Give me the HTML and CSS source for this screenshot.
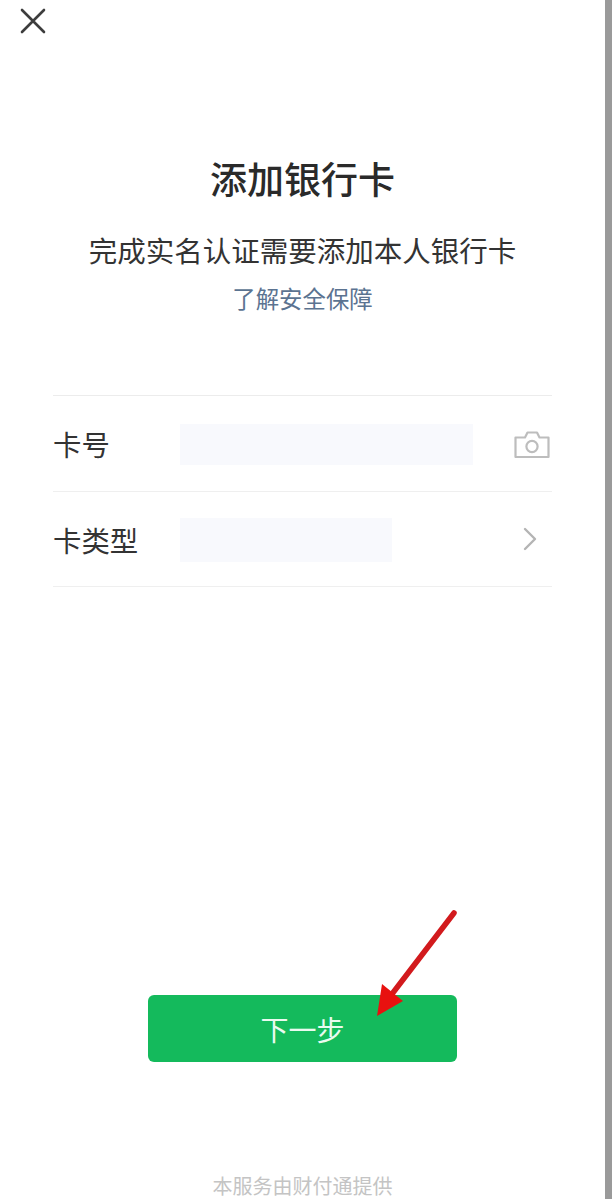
FILE: index.html
```html
<!DOCTYPE html>
<html lang="zh-CN">
<head>
<meta charset="utf-8">
<title>添加银行卡</title>
<link rel="stylesheet" href="styles.css">
</head>
<body>
<main class="page">
  <header class="topbar">
    <svg class="close" viewBox="0 0 26 26" width="26" height="26" aria-label="关闭">
      <path d="M2 2 L24 24 M24 2 L2 24" fill="none" stroke="#3d3d3d" stroke-width="2.6" stroke-linecap="round"/>
    </svg>
  </header>
  <section class="intro">
    <h1 class="title">添加银行卡</h1>
    <p class="subtitle">完成实名认证需要添加本人银行卡</p>
    <a class="link">了解安全保障</a>
  </section>
  <section class="form">
    <div class="row">
      <span class="label">卡号</span>
      <div class="field field-number"></div>
      <svg class="icon-camera" viewBox="0 0 36 28" width="36" height="28">
        <path d="M1.5 6.5 H11 L13.5 1.5 H23 L25.5 6.5 H34.5 V26 H1.5 Z" fill="none" stroke="#bdbdbd" stroke-width="2.2" stroke-linejoin="round"/>
        <circle cx="18" cy="15.5" r="5.6" fill="none" stroke="#bdbdbd" stroke-width="2.2"/>
      </svg>
    </div>
    <div class="row">
      <span class="label">卡类型</span>
      <div class="field field-type"></div>
      <svg class="icon-chevron" viewBox="0 0 14 24" width="14" height="24">
        <path d="M2 2 L12 12 L2 22" fill="none" stroke="#b4b4b4" stroke-width="2.4" stroke-linecap="round" stroke-linejoin="round"/>
      </svg>
    </div>
  </section>
  <div class="actions">
    <button class="next" type="button">下一步</button>
  </div>
  <footer class="provider">本服务由财付通提供</footer>
  <svg class="arrow" viewBox="0 0 90 115" width="90" height="115">
    <path d="M80 5 L18 86" fill="none" stroke="#d21a1d" stroke-width="5.5" stroke-linecap="round"/>
    <path d="M3 108 L8 76 L29 93 Z" fill="#e8110f"/>
  </svg>
</main>
<div class="edge"></div>
</body>
</html>
```

FILE: styles.css
```css
* { box-sizing: border-box; }
html, body { margin: 0; height: 100%; }
body {
  display: flex;
  height: 1199px;
  overflow: hidden;
  background: #fff;
  font-family: "Noto Sans CJK SC", "Noto Sans", sans-serif;
  color: #2f2f2f;
}
.page {
  position: relative;
  flex: 1;
  display: flex;
  flex-direction: column;
  min-width: 0;
}
.page > * { flex-shrink: 0; }
.edge { width: 7px; background: #9a9a9a; }
.topbar { height: 157px; padding: 8px 0 0 20px; }
.close { display: block; }
.intro { display: flex; flex-direction: column; align-items: center; }
.title {
  margin: 0;
  font-size: 37px;
  line-height: 42px;
  font-weight: 500;
  color: #2a2a2a;
}
.subtitle {
  margin: 31px 0 0;
  font-size: 28.5px;
  line-height: 40px;
  font-weight: 400;
  color: #333;
}
.link {
  margin-top: 12px;
  font-size: 23.4px;
  line-height: 32px;
  color: #5b7391;
}
.form {
  margin: 81px 53px 0;
  width: 499px;
  border-top: 1px solid #ececec;
}
.row {
  display: flex;
  align-items: center;
  height: 95.5px;
  border-bottom: 1px solid #efefef;
}
.label {
  width: 127px;
  margin-top: 2px;
  font-size: 28.4px;
  line-height: 38px;
  color: #333;
}
.field { background: #f8f9fd; }
.field-number { width: 293px; height: 41px; margin-top: 2px; }
.field-type { width: 212px; height: 44px; margin-top: 2px; }
.icon-camera { margin-left: 41px; margin-top: 3px; }
.icon-chevron { margin-left: 131px; }
.actions { margin-top: 408px; display: flex; padding-left: 148px; }
.next {
  width: 309px;
  height: 67px;
  border: 0;
  border-radius: 6px;
  background: #14ba5c;
  color: #eafbf0;
  font: inherit;
  font-size: 28px;
}
.provider {
  margin-top: 109px;
  text-align: center;
  font-size: 20px;
  line-height: 30px;
  color: #c4c4c4;
}
.arrow { position: absolute; left: 374px; top: 908px; }
```
